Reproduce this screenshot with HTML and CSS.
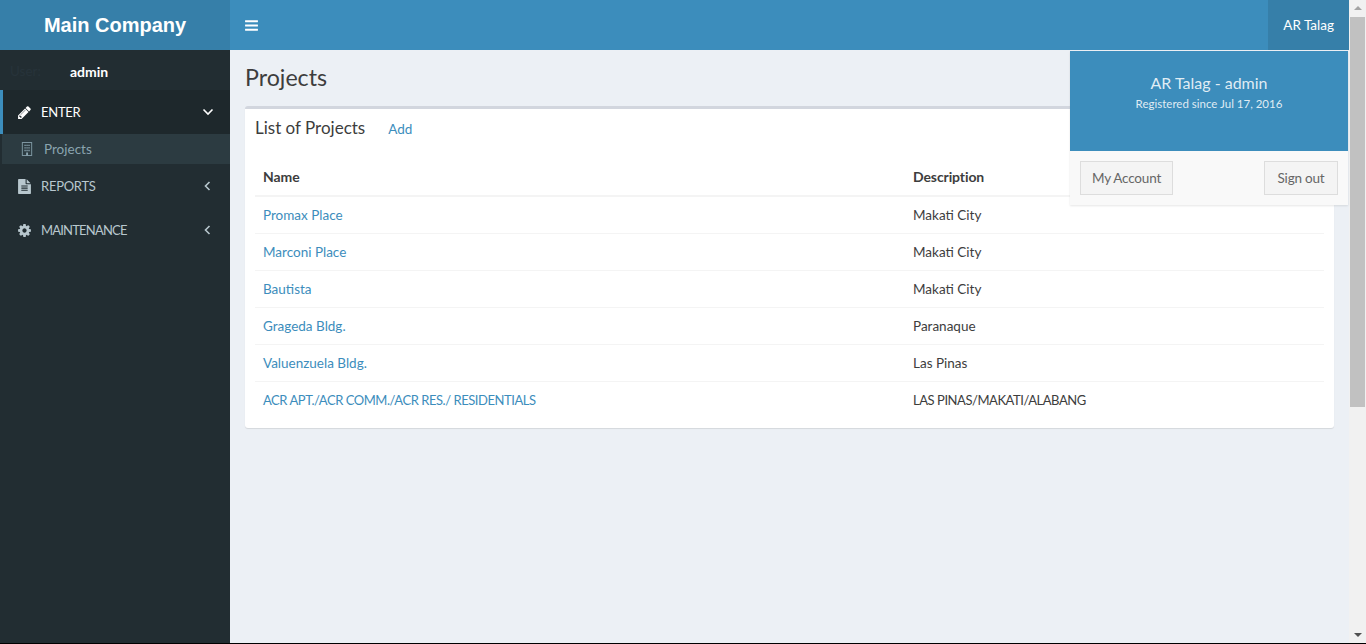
FILE: index.html
```html
<!DOCTYPE html>
<html>
<head>
<title>Projects</title>
<link rel="stylesheet" href="styles.css">
</head>
<body>
<div class="window">
  <div class="app">
    <aside class="sidebar">
      <div class="logo">Main Company</div>
      <div class="user-panel">
        <span class="user-label">User:</span>
        <span class="user-name">admin</span>
      </div>
      <ul class="menu">
        <li class="menu-item active">
          <svg class="menu-icon" viewBox="0 0 1792 1792"><path d="M491 1536l91-91-235-235-91 91v107h128v128h107zm523-928q0-22-22-22-10 0-17 7l-542 542q-7 7-7 17 0 22 22 22 10 0 17-7l542-542q7-7 7-17zm-54-192l416 416-832 832h-416v-416zm683 96q0 53-37 90l-166 166-416-416 166-165q36-38 90-38 53 0 91 38l235 234q37 39 37 91z"/></svg>
          <span class="menu-text">ENTER</span>
          <svg class="angle" viewBox="0 0 12 12"><polyline points="1.500,3.500 6,8 10.500,3.500"/></svg>
        </li>
        <li class="submenu-item">
          <svg class="sub-icon" viewBox="0 0 14 16">
            <rect class="outline" x="1.500" y="0.500" width="11" height="15"/>
            <path class="windows" d="M4 3h1.500v1.500H4zM6.300 3h1.500v1.500H6.300zM8.600 3h1.500v1.500H8.600zM4 6h1.500v1.500H4zM6.300 6h1.500v1.500H6.300zM8.600 6h1.500v1.500H8.600zM4 9h1.500v1.500H4zM6.300 9h1.500v1.500H6.300zM8.600 9h1.500v1.500H8.600zM6 12h2.200v3.500H6z"/>
          </svg>
          <span>Projects</span>
        </li>
        <li class="menu-item">
          <svg class="menu-icon" viewBox="0 0 1792 1792"><path d="M1596 476q14 14 28 36h-472v-472q22 14 36 28zm-476 164h544v1056q0 40-28 68t-68 28h-1344q-40 0-68-28t-28-68v-1600q0-40 28-68t68-28h800v544q0 40 28 68t68 28zm160 736v-64q0-14-9-23t-23-9h-704q-14 0-23 9t-9 23v64q0 14 9 23t23 9h704q14 0 23-9t9-23zm0-256v-64q0-14-9-23t-23-9h-704q-14 0-23 9t-9 23v64q0 14 9 23t23 9h704q14 0 23-9t9-23zm0-256v-64q0-14-9-23t-23-9h-704q-14 0-23 9t-9 23v64q0 14 9 23t23 9h704q14 0 23-9t9-23z"/></svg>
          <span class="menu-text">REPORTS</span>
          <svg class="angle" viewBox="0 0 12 12"><polyline points="7.500,2 3.500,6 7.500,10"/></svg>
        </li>
        <li class="menu-item">
          <svg class="menu-icon" viewBox="0 0 1792 1792"><path d="M1152 896q0-106-75-181t-181-75-181 75-75 181 75 181 181 75 181-75 75-181zm512-109v222q0 12-8 23t-20 13l-185 28q-19 54-39 91 35 50 107 138 10 12 10 25t-9 23q-27 37-99 108t-94 71q-12 0-26-9l-138-108q-44 23-91 38-16 136-29 186-7 28-36 28h-222q-14 0-24.500-8.500t-11.500-21.500l-28-184q-49-16-90-37l-141 107q-10 9-25 9-14 0-25-11-126-114-165-168-7-10-7-23 0-12 8-23 15-21 51-66.500t54-70.500q-27-50-41-99l-183-27q-13-2-21-12.500t-8-23.500v-222q0-12 8-23t19-13l186-28q14-46 39-92-40-57-107-138-10-12-10-24 0-10 9-23 26-36 98.500-107.500t94.500-71.500q13 0 26 10l138 107q44-23 91-38 16-136 29-186 7-28 36-28h222q14 0 24.500 8.500t11.500 21.500l28 184q49 16 90 37l142-107q9-9 24-9 13 0 25 10 129 119 165 170 7 8 7 22 0 12-8 23-15 21-51 66.500t-54 70.500q26 50 41 98l183 28q13 2 21 12.500t8 23.500z"/></svg>
          <span class="menu-text tight">MAINTENANCE</span>
          <svg class="angle" viewBox="0 0 12 12"><polyline points="7.500,2 3.500,6 7.500,10"/></svg>
        </li>
      </ul>
    </aside>

    <div class="main">
      <nav class="navbar">
        <svg class="toggle" viewBox="0 0 1792 1792"><path d="M1664 1344v128q0 26-19 45t-45 19h-1408q-26 0-45-19t-19-45v-128q0-26 19-45t45-19h1408q26 0 45 19t19 45zm0-512v128q0 26-19 45t-45 19h-1408q-26 0-45-19t-19-45v-128q0-26 19-45t45-19h1408q26 0 45 19t19 45zm0-512v128q0 26-19 45t-45 19h-1408q-26 0-45-19t-19-45v-128q0-26 19-45t45-19h1408q26 0 45 19t19 45z"/></svg>
        <div class="nav-user">AR Talag</div>
      </nav>

      <div class="dropdown">
        <div class="dropdown-header">
          <div class="dropdown-name">AR Talag - admin</div>
          <div class="dropdown-since">Registered since Jul 17, 2016</div>
        </div>
        <div class="dropdown-footer">
          <a class="btn btn-account">My Account</a>
          <a class="btn btn-signout">Sign out</a>
        </div>
      </div>

      <section class="content">
        <h1>Projects</h1>
        <div class="box">
          <div class="box-header">
            <h3>List of Projects</h3>
            <a class="link add-link">Add</a>
          </div>
          <table class="projects">
            <thead>
              <tr><th class="col-name">Name</th><th>Description</th></tr>
            </thead>
            <tbody>
              <tr><td><a class="link">Promax Place</a></td><td>Makati City</td></tr>
              <tr><td><a class="link">Marconi Place</a></td><td>Makati City</td></tr>
              <tr><td><a class="link">Bautista</a></td><td>Makati City</td></tr>
              <tr><td><a class="link">Grageda Bldg.</a></td><td>Paranaque</td></tr>
              <tr><td><a class="link">Valuenzuela Bldg.</a></td><td>Las Pinas</td></tr>
              <tr class="caps"><td><a class="link">ACR APT./ACR COMM./ACR RES./ RESIDENTIALS</a></td><td>LAS PINAS/MAKATI/ALABANG</td></tr>
            </tbody>
          </table>
        </div>
      </section>
    </div>
  </div>

  <div class="scrollbar">
    <div class="arrow-up"></div>
    <div class="thumb"></div>
    <div class="arrow-down"></div>
  </div>
</div>
<div class="bottom-line"></div>
</body>
</html>
```

FILE: styles.css
```css
* {
  box-sizing: border-box;
}
html, body {
  height: 100%;
}
body {
  margin: 0;
  display: flex;
  flex-direction: column;
  overflow: hidden;
  font-family: Lato, "Open Sans", sans-serif;
  font-size: 13.5px;
  color: #3d3d3d;
  background: #ecf0f5;
}
.window {
  flex: 1;
  display: flex;
  min-height: 0;
}
.app {
  flex: 1;
  display: flex;
  min-width: 0;
}
.bottom-line {
  height: 1px;
  background: #000;
}

/* sidebar */
.sidebar {
  width: 230px;
  background: #222d32;
}
.logo {
  height: 50px;
  line-height: 50px;
  text-align: center;
  font-family: "Liberation Sans", Arial, sans-serif;
  font-size: 20px;
  font-weight: bold;
  color: #fff;
  background: #367fa9;
}
.user-panel {
  height: 40px;
  display: flex;
  align-items: center;
  padding: 2px 0 0 10px;
}
.user-label {
  width: 60px;
  color: #27333a;
}
.user-name {
  font-size: 14px;
  font-weight: bold;
  color: #fff;
}
.menu {
  list-style: none;
  margin: 0;
  padding: 0;
}
.menu-item {
  height: 44px;
  display: flex;
  align-items: center;
  padding: 0 16px 0 17px;
  color: #b8c7ce;
  fill: #b8c7ce;
  stroke: #b8c7ce;
}
.menu-item.active {
  padding-left: 14px;
  border-left: 3px solid #3c8dbc;
  background: #1e282c;
  color: #fff;
  fill: #fff;
  stroke: #fff;
}
.menu-icon {
  width: 15px;
  height: 15px;
  margin-right: 9px;
  stroke: none;
}
.menu-text {
  flex: 1;
  font-size: 13px;
  letter-spacing: -0.25px;
}
.menu-text.tight {
  letter-spacing: -0.8px;
}
.angle {
  width: 12px;
  height: 12px;
  fill: none;
  stroke-width: 1.6;
}
.submenu-item {
  height: 30px;
  display: flex;
  align-items: center;
  margin-left: 2px;
  padding-left: 19px;
  background: #2c3b41;
  color: #8aa4af;
}
.sub-icon {
  width: 12px;
  height: 14px;
  margin-right: 11px;
}
.outline {
  fill: none;
  stroke: #8aa4af;
}
.windows {
  fill: #8aa4af;
}

/* top bar */
.main {
  position: relative;
  flex: 1;
  display: flex;
  flex-direction: column;
  min-width: 0;
}
.navbar {
  height: 50px;
  display: flex;
  align-items: center;
  justify-content: space-between;
  padding-left: 14px;
  background: #3c8dbc;
}
.toggle {
  width: 15px;
  height: 15px;
  fill: #fff;
}
.nav-user {
  height: 50px;
  line-height: 50px;
  padding: 0 15px;
  color: #fff;
  background: #367fa9;
}

/* user dropdown */
.dropdown {
  position: absolute;
  top: 51px;
  right: 1px;
  width: 278px;
  background: #f9f9f9;
  box-shadow: 0 1px 2px rgba(0, 0, 0, 0.1);
}
.dropdown-header {
  height: 100px;
  padding-top: 21px;
  text-align: center;
  background: #3c8dbc;
  color: rgba(255, 255, 255, 0.85);
}
.dropdown-name {
  font-size: 16px;
  line-height: 22px;
}
.dropdown-since {
  font-size: 11.5px;
  line-height: 20px;
}
.dropdown-footer {
  display: flex;
  justify-content: space-between;
  padding: 10px;
}
.btn {
  height: 34px;
  line-height: 32px;
  text-align: center;
  letter-spacing: -0.2px;
  border: 1px solid #ddd;
  background: #f4f4f4;
  color: #666;
}
.btn-account {
  width: 93px;
}
.btn-signout {
  width: 74px;
}

/* content */
.content {
  flex: 1;
  padding: 14px 15px 15px;
}
h1 {
  margin: 0 0 16px;
  font-size: 23.2px;
  font-weight: 400;
  line-height: 26px;
}
.box {
  height: 322px;
  padding: 0 10px;
  border-top: 3px solid #d2d6de;
  border-radius: 3px;
  background: #fff;
  box-shadow: 0 1px 1px rgba(0, 0, 0, 0.1);
}
.box-header {
  height: 49px;
  display: flex;
  align-items: center;
  padding-bottom: 12px;
}
h3 {
  margin: 0 23px 0 0;
  font-size: 17px;
  font-weight: 400;
}
.link {
  color: #3c8dbc;
}
.add-link {
  padding-top: 2px;
}
.projects {
  width: 100%;
  border-collapse: collapse;
}
.projects th {
  height: 38px;
  padding: 0 8px;
  text-align: left;
  font-size: 14px;
  font-weight: bold;
  letter-spacing: -0.1px;
  border-bottom: 2px solid #f4f4f4;
}
.projects .col-name {
  width: 650px;
}
.projects td {
  height: 37px;
  padding: 0 8px;
  border-top: 1px solid #f4f4f4;
}
.projects tbody tr:first-child td {
  border-top: none;
}
.projects .caps td {
  font-size: 13px;
  letter-spacing: -0.45px;
}

/* fake browser scrollbar */
.scrollbar {
  width: 17px;
  display: flex;
  flex-direction: column;
  align-items: center;
  background: #f1f1f1;
}
.arrow-up, .arrow-down {
  width: 0;
  height: 0;
  margin: 6px 0 6px;
  border-left: 4px solid transparent;
  border-right: 4px solid transparent;
}
.arrow-up {
  border-bottom: 4px solid #a3a3a3;
}
.arrow-down {
  margin-top: auto;
  border-top: 4px solid #505050;
}
.thumb {
  width: 15px;
  height: 390px;
  margin-top: 1px;
  background: #c1c1c1;
}
```
